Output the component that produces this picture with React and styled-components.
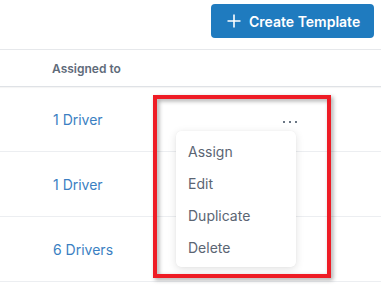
import React from "react";
import styled, { createGlobalStyle } from "styled-components";

const Global = createGlobalStyle`
  html, body { margin: 0; padding: 0; background: #fff; }
  body { font-family: Inter, "Noto Sans", sans-serif; -webkit-font-smoothing: antialiased; }
`;

const Page = styled.div`
  position: relative;
  width: 381px;
  height: 293px;
  overflow: hidden;
  background: #fff;
`;

const TopBar = styled.div`
  height: 50px;
  display: flex;
  justify-content: flex-end;
  align-items: flex-start;
  padding: 4px 7px 0 0;
  box-sizing: border-box;
  border-bottom: 1px solid #e6e8eb;
`;

const PrimaryButton = styled.button`
  display: flex;
  align-items: center;
  gap: 8px;
  height: 34px;
  width: 163px;
  padding: 0 0 0 16px;
  box-sizing: border-box;
  border: none;
  border-radius: 4px;
  background: #1f7bbf;
  color: #fff;
  font-family: Inter, sans-serif;
  font-size: 14px;
  font-weight: 600;
  cursor: pointer;
`;

const HeaderRow = styled.div`
  height: 36px;
  display: flex;
  align-items: center;
  padding-left: 52px;
  border-bottom: 1px solid #dfe2e6;
  box-shadow: 0 1px 1px rgba(0, 0, 0, 0.04);
`;

const HeaderCell = styled.span`
  font-size: 12px;
  font-weight: 600;
  color: #5f6b7a;
`;

const Row = styled.div`
  height: 64px;
  display: flex;
  align-items: center;
  padding-left: 53px;
  border-bottom: 1px solid #eceef1;
  position: relative;
`;

const DriverLink = styled.span`
  font-size: 14px;
  color: #3b7fc2;
  width: 230px;
`;

const More = styled.span`
  display: flex;
  gap: 2px;
  margin-top: 6px;
  margin-left: -0px;
`;

const Dot = styled.i`
  width: 2px;
  height: 2px;
  background: #6b7785;
  display: block;
  margin-right: 2px;
`;

const Menu = styled.div`
  position: absolute;
  left: 176px;
  top: 131px;
  width: 120px;
  padding: 4px 0;
  background: #fff;
  border-radius: 5px;
  box-shadow: 0 2px 8px rgba(0, 0, 0, 0.12), 0 0 1px rgba(0, 0, 0, 0.08);
`;

const MenuItem = styled.div`
  height: 32px;
  display: flex;
  align-items: center;
  padding-left: 12px;
  font-size: 14px;
  color: #5b6573;
`;

const Highlight = styled.div`
  position: absolute;
  left: 153px;
  top: 95px;
  width: 178px;
  height: 183px;
  box-sizing: border-box;
  border: 4px solid #ee1c25;
  filter: drop-shadow(2px 2px 2px rgba(0, 0, 0, 0.35));
  pointer-events: none;
`;

function PlusIcon() {
  return (
    <svg width="14" height="14" viewBox="0 0 14 14">
      <path d="M7 0.5v13M0.5 7h13" stroke="#fff" strokeWidth="1.6" />
    </svg>
  );
}

const rows = ["1 Driver", "1 Driver", "6 Drivers"];

export default function App() {
  return (
    <Page>
      <Global />
      <TopBar>
        <PrimaryButton>
          <PlusIcon />
          Create Template
        </PrimaryButton>
      </TopBar>
      <HeaderRow>
        <HeaderCell>Assigned to</HeaderCell>
      </HeaderRow>
      {rows.map((r, i) => (
        <Row key={i}>
          <DriverLink>{r}</DriverLink>
          {i === 0 && (
            <More>
              <Dot />
              <Dot />
              <Dot />
            </More>
          )}
        </Row>
      ))}
      <Menu>
        <MenuItem>Assign</MenuItem>
        <MenuItem>Edit</MenuItem>
        <MenuItem>Duplicate</MenuItem>
        <MenuItem>Delete</MenuItem>
      </Menu>
      <Highlight />
    </Page>
  );
}
